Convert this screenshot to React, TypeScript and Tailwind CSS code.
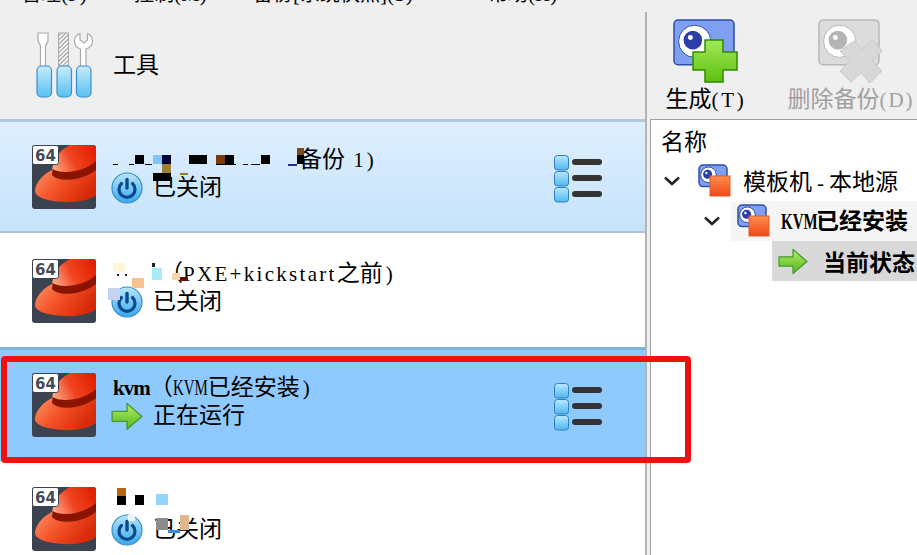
import React from 'react';

const Lat = ({ children, bold, className = '' }: { children: React.ReactNode; bold?: boolean; className?: string }) => (
  <span className={`font-['Liberation_Serif',serif] text-[21px] ${bold ? 'font-bold' : 'font-normal'} ${className}`}>{children}</span>
);

// KVM is narrow in the reference's bitmap font
const Kvm = ({ bold }: { bold?: boolean }) => (
  <span className="inline-block w-[35px] whitespace-nowrap">
    <span className={`inline-block origin-left scale-x-[0.65] font-['Liberation_Serif',serif] text-[23px] ${bold ? 'font-bold' : 'font-normal'}`}>KVM</span>
  </span>
);

// mosaic left over the redacted names: x, y, w, h, colour
type Block = [number, number, number, number, string];

const blocks: Block[] = [
  [135, 155, 9, 9, '#000'], [153, 155, 9, 9, '#84c4f4'], [162, 155, 9, 9, '#00003c'], [162, 164, 9, 9, '#9c8232'],
  [153, 173, 18, 8, '#000'], [189, 155, 18, 9, '#000'], [216, 155, 9, 9, '#7a3a0a'], [225, 155, 9, 9, '#000'],
  [261, 155, 9, 9, '#000'], [297, 155, 7, 9, '#000'], [297, 148, 7, 7, '#7a4a20'], [288, 164, 9, 2, '#2a2a90'],
  [180, 173, 8, 2, '#9c7a20'], [113, 164, 5, 1, '#000'], [129, 164, 5, 1, '#000'], [145, 164, 7, 1, '#000'],
  [216, 164, 20, 1, '#000'], [243, 164, 5, 1, '#000'], [251, 164, 9, 1, '#000'],
  [113, 263, 12, 9, '#fdf6d8'], [117, 274, 2, 2, '#222'], [125, 274, 2, 2, '#222'], [132, 278, 12, 10, '#f6c28e'],
  [108, 288, 12, 12, '#c4d4f0'], [152, 268, 10, 12, '#a8ecf8'], [152, 263, 3, 4, '#222'], [172, 273, 8, 7, '#f8d8a8'],
  [180, 277, 8, 4, '#6a0a0a'],
  [117, 488, 9, 8, '#b5650f'], [117, 496, 9, 9, '#000'], [135, 495, 9, 10, '#000'], [156, 494, 12, 11, '#93d5fb'],
  [156, 518, 12, 12, '#8c8c8c'], [168, 530, 12, 3, '#3a8ad8'], [180, 515, 9, 15, '#dcb88c'], [128, 515, 7, 6, '#e8f6fc'],
];

const HatIcon = () => (
  <svg width="64" height="64" viewBox="0 0 64 64" className="shrink-0">
    <defs>
      <linearGradient id="brim" x1="0" y1="0" x2="1" y2="0.5">
        <stop offset="0" stopColor="#ff9a70" />
        <stop offset="0.5" stopColor="#f4552a" />
        <stop offset="1" stopColor="#d82a08" />
      </linearGradient>
      <linearGradient id="crown" x1="0" y1="0.6" x2="1" y2="0.2">
        <stop offset="0" stopColor="#ffa888" />
        <stop offset="0.45" stopColor="#f04420" />
        <stop offset="1" stopColor="#e02000" />
      </linearGradient>
    </defs>
    <rect width="64" height="64" rx="3" fill="#3b4250" />
    <path d="M3 46C3 38 12 28 22 24C30 34 50 30 64 20V50C58 55 44 58 32 57C14 56 3 52 3 46Z" fill="url(#brim)" />
    <path d="M20 28C20 16 26 6 38 0H61Q64 0 64 3V26C50 36 28 38 20 28Z" fill="url(#crown)" />
    <path d="M20.5 24C30 30 52 27 64 16V25C50 36 28 38 20 30Z" fill="#8a1400" />
    <rect x="0.5" y="0.5" width="26" height="19" rx="2" fill="#fff" stroke="#3b4250" />
    <text x="13.5" y="15.5" textAnchor="middle" fontSize="15" fontWeight="700" fill="#444b58" fontFamily="'DejaVu Sans', sans-serif">64</text>
  </svg>
);

const PowerIcon = () => (
  <svg width="32" height="32" viewBox="0 0 32 32" className="shrink-0">
    <defs>
      <linearGradient id="pw" x1="0" y1="0" x2="0" y2="1">
        <stop offset="0" stopColor="#b8e6fb" />
        <stop offset="1" stopColor="#38a8ee" />
      </linearGradient>
    </defs>
    <circle cx="16" cy="16" r="15" fill="url(#pw)" stroke="#3a8cc4" strokeWidth="1.2" />
    <path d="M10.5 11.5A8 8 0 1 0 21.5 11.5" fill="none" stroke="#0a4a8c" strokeWidth="3.2" strokeLinecap="round" />
    <path d="M16 7.5V16" fill="none" stroke="#0a4a8c" strokeWidth="3.4" strokeLinecap="round" />
  </svg>
);

const ArrowIcon = ({ size = 32 }: { size?: number }) => (
  <svg width={size} height={size * 0.9} viewBox="0 0 32 29" className="shrink-0">
    <defs>
      <linearGradient id="arr" x1="0" y1="0" x2="0" y2="1">
        <stop offset="0" stopColor="#b8ec60" />
        <stop offset="1" stopColor="#50b820" />
      </linearGradient>
    </defs>
    <path d="M1 9.5H16V1.5L31 14.5L16 27.5V19.5H1Z" fill="url(#arr)" stroke="#3f9a30" strokeWidth="1.3" strokeLinejoin="round" />
  </svg>
);

const ListIcon = () => (
  <svg width="49" height="48" viewBox="0 0 49 48" className="shrink-0">
    <defs>
      <linearGradient id="sq" x1="0" y1="0" x2="0" y2="1">
        <stop offset="0" stopColor="#b8e8fb" />
        <stop offset="1" stopColor="#50b8ee" />
      </linearGradient>
    </defs>
    {[0, 16, 32].map(y => (
      <g key={y}>
        <rect x="0.5" y={y + 0.5} width="14" height="14.5" rx="3" fill="url(#sq)" stroke="#2e80c0" />
        <rect x="18" y={y + 4} width="30" height="6" rx="3" fill="#333" />
      </g>
    ))}
  </svg>
);

const ToolsIcon = () => (
  <svg width="64" height="66" viewBox="0 0 64 66" className="shrink-0">
    <defs>
      <linearGradient id="hd" x1="0" y1="0" x2="0" y2="1">
        <stop offset="0" stopColor="#c8ecfc" />
        <stop offset="1" stopColor="#58c0f2" />
      </linearGradient>
      <pattern id="hatch" width="3" height="3" patternUnits="userSpaceOnUse" patternTransform="rotate(45)">
        <rect width="3" height="3" fill="#fff" />
        <rect width="1.2" height="3" fill="#999" />
      </pattern>
    </defs>
    <path d="M6 1H16V9L13.5 14V35H8.5V14L6 9Z" fill="#fff" stroke="#aaa" strokeWidth="1.2" />
    <rect x="26.5" y="1" width="10" height="33" fill="url(#hatch)" stroke="#aaa" />
    <path d="M48 1.5C44 3 42.5 6 42.5 9C42.5 13 45 16 48.5 17V35H54V17C57.5 16 60.5 13 60.5 9C60.5 6 59 3 55.5 1.5V8L52 11L48 8Z" fill="#fff" stroke="#aaa" strokeWidth="1.2" />
    {[5, 25, 44.5].map(x => (
      <rect key={x} x={x} y="34" width="14.5" height="31" rx="4.5" fill="url(#hd)" stroke="#3b8fc8" strokeWidth="1.2" />
    ))}
  </svg>
);

const Snapshot = ({ gray, size }: { gray?: boolean; size: number }) => {
  const frame = gray ? '#b8b8b8' : '#2c4fa8';
  const fill = gray ? '#dcdcdc' : '#7f9ff0';
  return (
    <g>
      <rect x="1" y="1" width={size - 2} height={size * 0.72} rx="4" fill={fill} stroke={frame} strokeWidth="1.5" />
      <circle cx={size * 0.35} cy={size * 0.36} r={size * 0.26} fill="#fff" stroke={frame} strokeWidth="1" />
      <circle cx={size * 0.32} cy={size * 0.34} r={size * 0.15} fill={gray ? '#b4b4b4' : '#2c3fa8'} />
      <circle cx={size * 0.28} cy={size * 0.3} r={size * 0.04} fill="#fff" />
    </g>
  );
};

const GenerateIcon = () => (
  <svg width="66" height="66" viewBox="0 0 66 66" className="shrink-0">
    <defs>
      <linearGradient id="plus" x1="0" y1="0" x2="0" y2="1">
        <stop offset="0" stopColor="#a4e858" />
        <stop offset="1" stopColor="#5cc010" />
      </linearGradient>
    </defs>
    <Snapshot size={62} />
    <path d="M32 21H50V33H64V51H50V63H32V51H20V33H32Z" fill="url(#plus)" stroke="#2f8a00" strokeWidth="1.5" />
  </svg>
);

const DeleteIcon = () => (
  <svg width="66" height="66" viewBox="0 0 66 66" className="shrink-0">
    <Snapshot gray size={62} />
    <path d="M36 22L44 30L54 20L64 32L54 42L64 52L52 64L43 54L33 63L22 52L32 42L22 32Z" fill="#d8d8d8" stroke="#c8c8c8" strokeWidth="1" />
  </svg>
);

const SmallSnapshot = () => (
  <svg width="34" height="34" viewBox="0 0 34 34" className="shrink-0">
    <defs>
      <linearGradient id="red" x1="0" y1="0" x2="0" y2="1">
        <stop offset="0" stopColor="#ff9050" />
        <stop offset="1" stopColor="#f04818" />
      </linearGradient>
    </defs>
    <Snapshot size={30} />
    <rect x="12" y="12" width="20" height="20" fill="url(#red)" stroke="#e05a30" />
  </svg>
);

const Chevron = () => (
  <svg width="18" height="12" viewBox="0 0 18 12" className="shrink-0">
    <path d="M2 2.5L9 9L16 2.5" fill="none" stroke="#222" strokeWidth="2.6" />
  </svg>
);

type Row = {
  name: React.ReactNode;
  status: string;
  running?: boolean;
  rowClass: string;
  showMenu?: boolean;
};

const rows: Row[] = [
  {
    name: <span className="ml-[186px]">备份<Lat className="tracking-[3px]"> 1)</Lat></span>,
    status: '已关闭',
    rowClass: 'border-t-[3px] border-b-2 border-t-[#b1c7db] border-b-[#a9c4dc] bg-gradient-to-b from-[#dfeffe] to-[#c5e3fb] pt-[23px]',
    showMenu: true,
  },
  {
    name: <span className="ml-[47px]">（<Lat className="tracking-[2.3px]">PXE+kickstart</Lat>之前<Lat className="ml-[3px]">)</Lat></span>,
    status: '已关闭',
    rowClass: 'bg-white pt-[26px]',
  },
  {
    name: <span><Lat bold className="tracking-[-1px]">kvm</Lat>（<Kvm />已经安装<Lat className="ml-[3px]">)</Lat></span>,
    status: '正在运行',
    running: true,
    rowClass: 'border-t-[3px] border-t-[#7fb4dc] bg-[#8fcaff] pt-[23px]',
    showMenu: true,
  },
  {
    name: <span>&nbsp;</span>,
    status: '已关闭',
    rowClass: 'bg-white pt-[26px]',
  },
];

const App: React.FC = () => {
  return (
    <div className="relative flex h-[555px] w-[917px] flex-col overflow-hidden bg-[#efefef] font-['Noto_Sans_CJK_SC',sans-serif] text-[23px] text-black">
      {/* Menu bar, cut off by the top of the picture */}
      <div className="h-[12px] shrink-0 overflow-hidden pl-[21px]">
        <div className="-mt-[22px] flex h-[30px] items-center whitespace-nowrap text-[20px] leading-[30px]">
          <span className="w-[113px]">管理<Lat>(F)</Lat></span>
          <span className="w-[119px]">控制<Lat>(M)</Lat></span>
          <span className="w-[235px]">备份<Lat>[</Lat>系统快照<Lat>](S)</Lat></span>
          <span>帮助<Lat>(H)</Lat></span>
        </div>
      </div>

      <div className="flex min-h-0 flex-1">
        {/* VM list */}
        <div className="flex w-[645px] shrink-0 flex-col">
          <div className="flex h-[107px] shrink-0 items-center pb-[1px] pl-[32px]">
            <ToolsIcon />
            <span className="-mt-[4px] ml-[17px]">工具</span>
          </div>
          {rows.map((row, i) => (
            <div key={i} className={`flex h-[114px] shrink-0 items-start pl-[32px] ${row.rowClass}`}>
              <HatIcon />
              <div className="-mt-[1px] ml-[17px] flex flex-col">
                <div className="h-[27px] whitespace-nowrap leading-[27px]">{row.name}</div>
                <div className="-ml-[2px] mt-[1px] flex h-[27px] items-center whitespace-nowrap leading-[27px]">
                  <span className="mt-[5px]">{row.running ? <ArrowIcon /> : <PowerIcon />}</span>
                  <span className="ml-[10px]">{row.status}</span>
                </div>
              </div>
              {row.showMenu && (
                <div className="ml-auto mr-[42px] mt-[10px]">
                  <ListIcon />
                </div>
              )}
            </div>
          ))}
        </div>

        {/* Splitter */}
        <div className="w-[2px] shrink-0 bg-[#b4b4b4]" />

        {/* Snapshot pane */}
        <div className="flex min-w-0 flex-1 flex-col pl-[3px]">
          <div className="flex h-[107px] shrink-0 items-start">
            <div className="ml-[10px] flex w-[92px] flex-col items-center pt-[7px]">
              <GenerateIcon />
              <span className="-mt-[3px] whitespace-nowrap leading-[30px]">生成<Lat className="tracking-[2.7px]">(T)</Lat></span>
            </div>
            <div className="ml-[35px] flex w-[128px] flex-col items-center pt-[7px] text-[#a0a0a0]">
              <DeleteIcon />
              <span className="-mt-[3px] whitespace-nowrap leading-[30px]">删除备份<Lat className="tracking-[2px]">(D)</Lat></span>
            </div>
          </div>
          <div className="min-h-0 flex-1 border-l border-t border-l-[#a0a0a0] border-t-[#a0a0a0] bg-white">
            <div className="h-[41px] whitespace-nowrap pl-[10px] pt-[5px] leading-[30px]">名称</div>
            <div className="flex h-[40px] items-center whitespace-nowrap pl-[12px]">
              <Chevron />
              <span className="ml-[17px]"><SmallSnapshot /></span>
              <span className="ml-[11px]">模板机<Lat className="mx-[5px]">-</Lat>本地源</span>
            </div>
            <div className="flex h-[40px] items-center whitespace-nowrap pl-[52px]">
              <Chevron />
              <div className="ml-[10px] flex h-[40px] flex-1 items-center overflow-hidden bg-[#f5f5f5] pl-[6px]">
                <SmallSnapshot />
                <span className="ml-[10px] font-bold"><Kvm bold />已经安装</span>
              </div>
            </div>
            <div className="ml-[121px] flex h-[40px] items-center whitespace-nowrap bg-[#d9d9d9] pl-[6px]">
              <ArrowIcon size={30} />
              <span className="ml-[15px] font-bold">当前状态</span>
            </div>
          </div>
        </div>
      </div>

      {/* Red annotation frame drawn over the screenshot */}
      <div className="absolute left-[1px] top-[356px] h-[107px] w-[690px] rounded-[4px] border-[6px] border-[#f01010]" />

      {/* Redaction mosaic */}
      {blocks.map(([x, y, w, h, c], i) => (
        <div key={i} className="absolute" style={{ left: x, top: y, width: w, height: h, background: c }} />
      ))}
    </div>
  );
};

export default App;
